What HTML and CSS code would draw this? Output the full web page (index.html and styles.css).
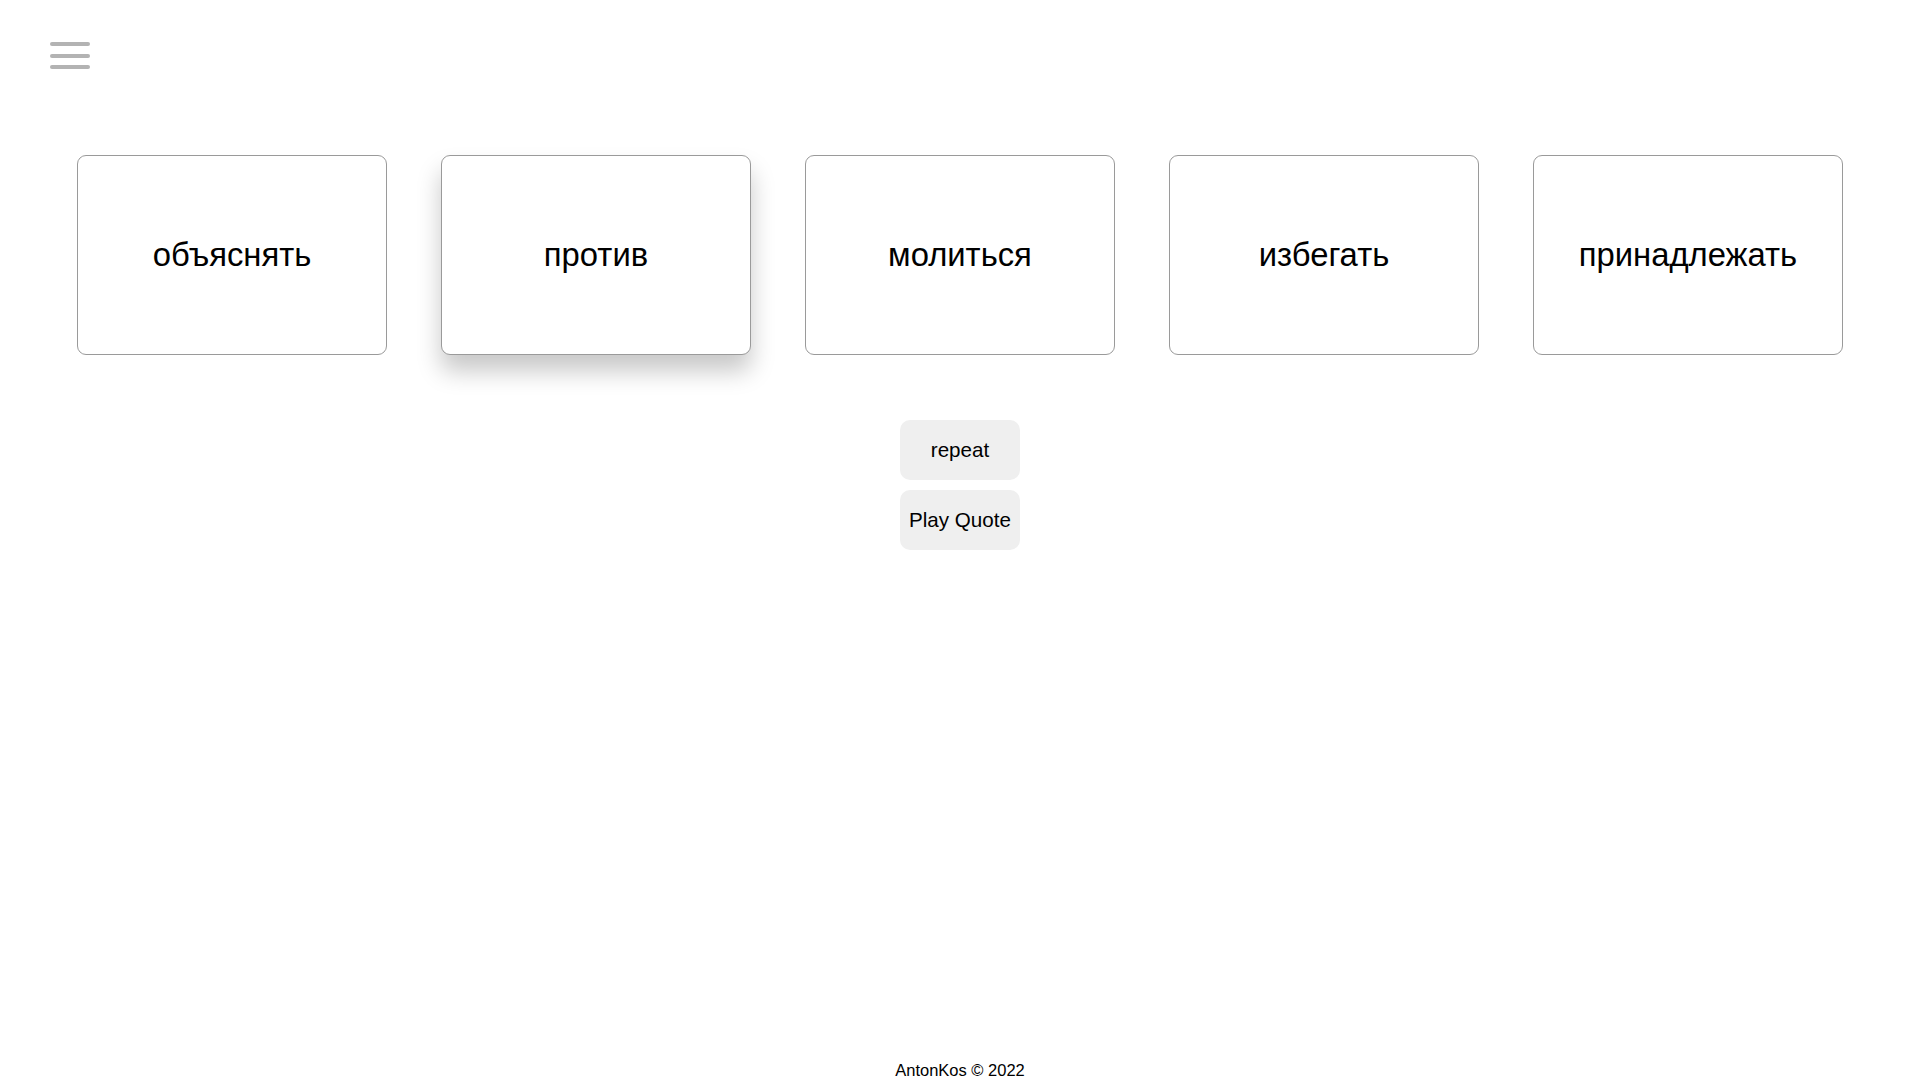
FILE: index.html
```html
<!DOCTYPE html>
<html lang="ru">
<head>
<meta charset="utf-8">
<title>Words</title>
<link rel="stylesheet" href="styles.css">
</head>
<body>
<div class="page">
  <header class="header">
    <button class="burger" aria-label="menu">
      <span class="bar"></span>
      <span class="bar"></span>
      <span class="bar"></span>
    </button>
  </header>
  <main class="main">
    <div class="cards">
      <div class="card">объяснять</div>
      <div class="card card-hover">против</div>
      <div class="card">молиться</div>
      <div class="card">избегать</div>
      <div class="card">принадлежать</div>
    </div>
    <div class="actions">
      <button class="btn">repeat</button>
      <button class="btn">Play Quote</button>
    </div>
  </main>
  <footer class="footer">AntonKos © 2022</footer>
</div>
</body>
</html>
```

FILE: styles.css
```css
html, body {
  margin: 0;
  padding: 0;
  background: #fff;
}
body {
  font-family: "Liberation Sans", Arial, sans-serif;
  color: #000;
}
.page {
  min-height: 1080px;
  display: flex;
  flex-direction: column;
}
.header {
  height: 155px;
  box-sizing: border-box;
  padding: 42px 0 0 50px;
}
.burger {
  display: flex;
  flex-direction: column;
  gap: 7.5px;
  width: 40px;
  padding: 0;
  border: 0;
  background: transparent;
}
.bar {
  display: block;
  width: 40px;
  height: 4px;
  border-radius: 2px;
  background: #b3b3b3;
}
.main {
  flex: 1;
  display: flex;
  flex-direction: column;
  align-items: center;
}
.cards {
  display: flex;
  justify-content: center;
  gap: 54px;
}
.card {
  width: 310px;
  height: 200px;
  box-sizing: border-box;
  border: 1px solid #9a9a9a;
  border-radius: 9px;
  background: #fff;
  display: flex;
  align-items: center;
  justify-content: center;
  font-size: 32.8px;
}
.card-hover {
  box-shadow: 0 16px 24px rgba(0, 0, 0, 0.22);
}
.actions {
  margin-top: 65px;
  display: flex;
  flex-direction: column;
  align-items: center;
  gap: 10px;
}
.btn {
  width: 120px;
  height: 60px;
  border: 0;
  border-radius: 10px;
  background: #efefef;
  font-family: "Liberation Sans", Arial, sans-serif;
  font-size: 20.6px;
  color: #000;
  padding: 0;
}
.footer {
  text-align: center;
  font-size: 16.5px;
  line-height: 18px;
  padding-bottom: 1px;
}
```
